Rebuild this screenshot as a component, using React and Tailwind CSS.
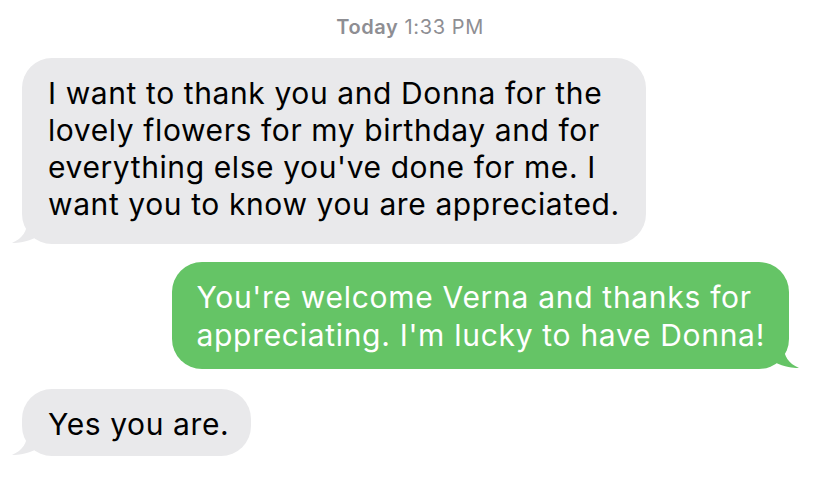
import React from "react";

const font = { fontFamily: "Inter, 'Liberation Sans', sans-serif" };

const TailLeft = ({ color }) => (
	<svg
		className="absolute -left-[11px] bottom-0"
		width="26"
		height="22"
		viewBox="0 0 26 22"
	>
		<path
			d="M16 0 C16 9 12 16 1 21 C1 21 12 22 26 15 L26 0 Z"
			fill={color}
		/>
	</svg>
);

const TailRight = ({ color }) => (
	<svg
		className="absolute -right-[11px] bottom-0"
		width="26"
		height="22"
		viewBox="0 0 26 22"
	>
		<path
			d="M10 0 C10 9 14 16 25 21 C25 21 14 22 0 15 L0 0 Z"
			fill={color}
		/>
	</svg>
);

const Received = ({ lines, className = "" }) => (
	<div className="flex justify-start pl-[22px]">
		<div
			className={`relative bg-[#e9e9eb] text-black rounded-[30px] pl-[26px] ${className}`}
		>
			<TailLeft color="#e9e9eb" />
			<div className="relative text-[30px] tracking-[0.6px] leading-[37px] whitespace-nowrap">
				{lines.map((l, i) => (
					<div key={i}>{l}</div>
				))}
			</div>
		</div>
	</div>
);

const Sent = ({ lines }) => (
	<div className="flex justify-end pr-[31px]">
		<div className="relative bg-[#65c466] text-white rounded-[30px] px-[24px] pt-[16px] pb-[15px]">
			<TailRight color="#65c466" />
			<div className="relative text-[30px] tracking-[0.7px] leading-[38px] whitespace-nowrap">
				{lines.map((l, i) => (
					<div key={i}>{l}</div>
				))}
			</div>
		</div>
	</div>
);

export default function App() {
	return (
		<div
			className="w-[820px] h-[480px] bg-white overflow-hidden flex flex-col"
			style={font}
		>
			<div className="text-center text-[20px] tracking-[0.6px] text-[#8e8e93] pt-[14px] leading-[26px]">
				<span className="font-semibold">Today</span> 1:33 PM
			</div>
			<div className="mt-[18px]">
				<Received
					className="pr-[26px] pt-[17px] pb-[21px]"
					lines={[
						"I want to thank you and Donna for the",
						"lovely flowers for my birthday and for",
						"everything else you've done for me. I",
						"want you to know you are appreciated.",
					]}
				/>
			</div>
			<div className="mt-[18px]">
				<Sent
					lines={[
						"You're welcome Verna and thanks for",
						"appreciating. I'm lucky to have Donna!",
					]}
				/>
			</div>
			<div className="mt-[20px]">
				<Received
					className="pr-[22px] pt-[17px] pb-[13px]"
					lines={["Yes you are."]}
				/>
			</div>
		</div>
	);
}
